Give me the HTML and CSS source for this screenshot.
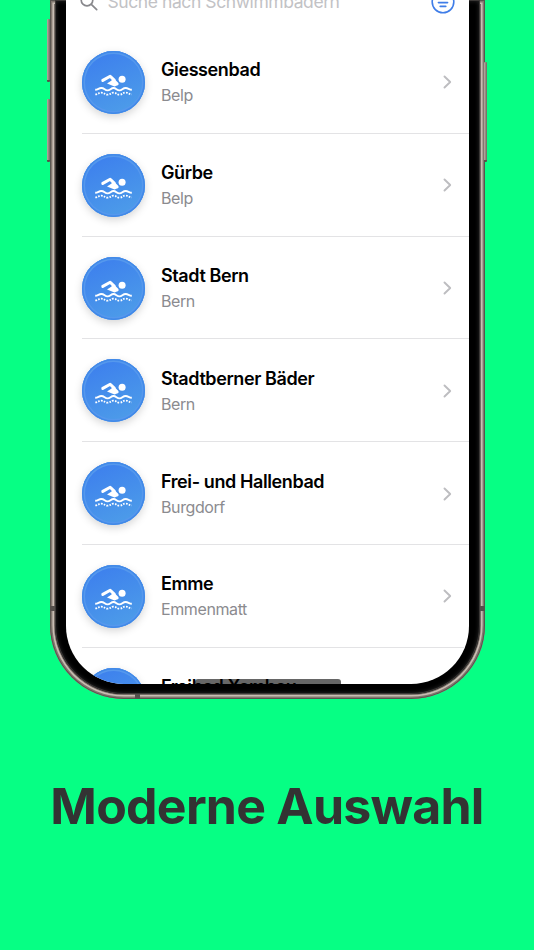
FILE: index.html
```html
<!DOCTYPE html>
<html lang="de">
  <head>
    <meta charset="UTF-8" />
    <meta name="viewport" content="width=device-width, initial-scale=1.0" />
    <title>Moderne Auswahl</title>
    <link rel="stylesheet" href="styles.css">
  </head>
  <body>
    <svg class="icons">
      <symbol id="swim" viewBox="0 0 63 63">
        <circle cx="40.1" cy="28.2" r="3.5" fill="#fff" />
        <path d="M20.8 29.4 28.2 25.3 32.2 29" fill="none" stroke="#fff" stroke-width="3" stroke-linecap="round" stroke-linejoin="round" />
        <path d="M30 25.6 36.4 32Q37.2 34.3 35 34.6L32.5 35.4 25 32.4 29.6 29.4Z" fill="#fff" />
        <path d="M13.2 38.8C16 38.8 16.8 37 19.2 37C22.5 37 22.7 39.4 25.5 39.4C28.3 39.4 28.8 37 31.5 37C34.2 37 34.7 39.4 37.5 39.4C40.3 39.4 40.5 37 43.8 37C46.2 37 47 38.8 49.8 38.8" fill="none" stroke="#fff" stroke-width="1.9" />
        <path d="M13.3 43.4C16 43.4 16.8 41.6 19.2 41.6C22.5 41.6 22.7 43.7 25.5 43.7C28.3 43.7 28.8 41.6 31.5 41.6C34.2 41.6 34.7 43.7 37.5 43.7C40.3 43.7 40.5 41.6 43.8 41.6C46.2 41.6 47 43.4 49.8 43.4" fill="none" stroke="#fff" stroke-width="1.8" stroke-dasharray="1.7 1.25" />
      </symbol>
      <symbol id="chevron" viewBox="0 0 9 14">
        <path d="M1.5 1.5 7.2 7 1.5 12.5" fill="none" stroke="#bdbdc0" stroke-width="1.9" stroke-linecap="round" stroke-linejoin="round" />
      </symbol>
    </svg>

    <main>
      <div class="phone">
        <span class="side-button volume-up"></span>
        <span class="side-button volume-down"></span>
        <span class="side-button power"></span>
        <span class="antenna antenna-left"></span>
        <span class="antenna antenna-right"></span>
        <span class="antenna antenna-bottom"></span>
        <div class="bezel">
          <div class="screen">
            <div class="search">
              <svg class="search-icon" viewBox="0 0 18 18">
                <circle cx="7" cy="7" r="5.8" />
                <path d="M11.3 11.3 16.7 16.7" />
              </svg>
              <span class="search-text">Suche nach Schwimmbädern</span>
              <svg class="filter-icon" viewBox="0 0 24 24">
                <circle cx="12" cy="12" r="10.8" />
                <path d="M6 8.6H18M7.4 12.6H16.6M9.2 16.4H14.8" />
              </svg>
            </div>
            <ul class="pools">
              <li>
                <span class="avatar"><svg><use href="#swim" /></svg></span>
                <div class="info"><h2>Giessenbad</h2><p>Belp</p></div>
                <svg class="chevron"><use href="#chevron" /></svg>
              </li>
              <li>
                <span class="avatar"><svg><use href="#swim" /></svg></span>
                <div class="info"><h2>Gürbe</h2><p>Belp</p></div>
                <svg class="chevron"><use href="#chevron" /></svg>
              </li>
              <li>
                <span class="avatar"><svg><use href="#swim" /></svg></span>
                <div class="info"><h2>Stadt Bern</h2><p>Bern</p></div>
                <svg class="chevron"><use href="#chevron" /></svg>
              </li>
              <li>
                <span class="avatar"><svg><use href="#swim" /></svg></span>
                <div class="info"><h2>Stadtberner Bäder</h2><p>Bern</p></div>
                <svg class="chevron"><use href="#chevron" /></svg>
              </li>
              <li>
                <span class="avatar"><svg><use href="#swim" /></svg></span>
                <div class="info"><h2>Frei- und Hallenbad</h2><p>Burgdorf</p></div>
                <svg class="chevron"><use href="#chevron" /></svg>
              </li>
              <li>
                <span class="avatar"><svg><use href="#swim" /></svg></span>
                <div class="info"><h2>Emme</h2><p>Emmenmatt</p></div>
                <svg class="chevron"><use href="#chevron" /></svg>
              </li>
              <li>
                <span class="avatar"><svg><use href="#swim" /></svg></span>
                <div class="info"><h2>Freibad Xambau</h2></div>
              </li>
            </ul>
            <span class="home-indicator"></span>
          </div>
        </div>
      </div>
      <h1>Moderne Auswahl</h1>
    </main>
  </body>
</html>
```

FILE: styles.css
```css
* {
  margin: 0;
  padding: 0;
  box-sizing: border-box;
}

body {
  font-family: Inter, "Liberation Sans", sans-serif;
  background-color: #06ff84;
  color: #000;
}

.icons {
  display: none;
}

main {
  width: 534px;
  height: 950px;
  overflow: hidden;
}

/* Phone frame */
.phone {
  position: relative;
  width: 434.5px;
  height: 699px;
  margin-left: 50px;
  padding: 0 5px 5px;
  border-radius: 0 0 74px 74px;
  background-color: #756c65;
  box-shadow: inset 0 0 0 1px #595550, inset 0 0 0 2.4px #82786f,
    inset 0 0 0 4px #c8bdb3;
}

.bezel {
  height: 694px;
  padding: 0 10.5px 10.5px;
  border-radius: 0 0 69px 69px;
  background-color: #000;
  box-shadow: inset 0 0 0 1px #3b3836, inset 0 0 4px 1px #292929;
}

.screen {
  position: relative;
  height: 683.5px;
  overflow: hidden;
  border-radius: 0 0 58px 58px;
  background-color: #fff;
}

.side-button {
  position: absolute;
  width: 3px;
  border-radius: 1px;
  background: linear-gradient(90deg, #b9aea3, #70675f);
  border-bottom: 2px solid #58514a;
}

.volume-up {
  left: -3px;
  top: 19px;
  height: 63px;
}

.volume-down {
  left: -3px;
  top: 99px;
  height: 63px;
}

.power {
  right: -2.5px;
  top: 62px;
  height: 100px;
}

.antenna {
  position: absolute;
  width: 5px;
  height: 5px;
  background-color: #55504c;
}

.antenna-left {
  left: 0;
  top: 606px;
}

.antenna-right {
  right: 0;
  top: 606px;
}

.antenna-bottom {
  left: 85px;
  bottom: 0;
}

/* Search bar */
.search {
  display: flex;
  align-items: center;
  height: 44px;
  margin-top: -20.5px;
  padding: 0 14px;
}

.search-icon {
  width: 18px;
  height: 18px;
  margin-right: 10px;
  fill: none;
  stroke: #88888c;
  stroke-width: 1.7;
  stroke-linecap: round;
}

.search-text {
  flex: 1;
  font-size: 17.5px;
  letter-spacing: -0.42px;
  color: #c2c2c5;
}

.filter-icon {
  width: 24px;
  height: 24px;
  fill: none;
  stroke: #3f7de8;
  stroke-width: 1.6;
  stroke-linecap: round;
}

/* List */
.pools {
  list-style: none;
  padding: 7.6px 0 0 16.5px;
}

.pools li {
  display: flex;
  align-items: center;
  height: 102.8px;
  padding: 1px 17px 0 0;
  border-bottom: 1px solid #e3e3e5;
}

.avatar {
  width: 63px;
  height: 63px;
  margin-right: 16px;
  border-radius: 50%;
  background: linear-gradient(155deg, #3b7cee, #4fa0e8);
  box-shadow: inset 0 0 0 1.5px #4189e8, inset 0 0 0 3px #5598ed,
    0 3px 8px rgba(0, 0, 0, 0.17);
}

.avatar svg {
  display: block;
  width: 63px;
  height: 63px;
}

.info {
  flex: 1;
}

.info h2 {
  font-size: 18px;
  font-weight: 600;
  line-height: 24px;
  letter-spacing: -0.4px;
}

.info p {
  margin-top: 2px;
  font-size: 16px;
  line-height: 22px;
  letter-spacing: -0.4px;
  color: #8b8b8f;
}

.chevron {
  width: 9px;
  height: 14px;
}

.pools li:last-child .info {
  padding-bottom: 24px;
}

.home-indicator {
  position: absolute;
  left: 129px;
  bottom: -1px;
  width: 146px;
  height: 5.5px;
  border-radius: 3px 3px 0 0;
  background-color: rgba(0, 0, 0, 0.6);
}

h1 {
  margin-top: 77px;
  font-size: 50px;
  font-weight: 700;
  line-height: 60px;
  letter-spacing: -0.75px;
  text-align: center;
  white-space: nowrap;
  color: #333;
}
```
